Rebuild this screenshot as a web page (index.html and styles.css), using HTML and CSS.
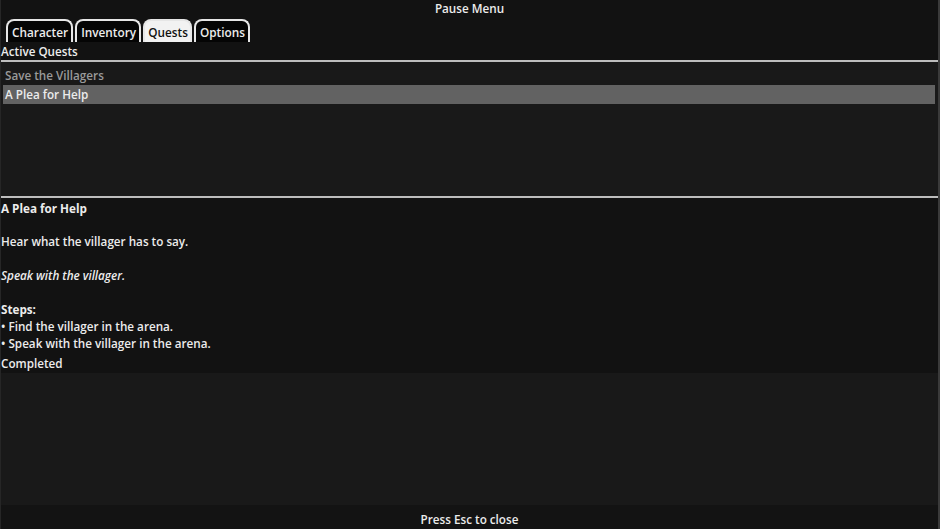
FILE: index.html
```html
<!DOCTYPE html>
<html lang="en">
<head>
    <meta charset="UTF-8">
    <meta name="viewport" content="width=device-width, initial-scale=1.0">
    <title>Pause Menu</title>
    <link rel="stylesheet" href="styles.css">
</head>
<body>
    <div class="menu">
        <div class="menu-title">Pause Menu</div>

        <div class="tabs">
            <div class="tab">Character</div>
            <div class="tab">Inventory</div>
            <div class="tab active">Quests</div>
            <div class="tab">Options</div>
        </div>

        <div class="section-title">Active Quests</div>

        <div class="quest-list">
            <div class="quest-item done">Save the Villagers</div>
            <div class="quest-item selected">A Plea for Help</div>
        </div>

        <div class="quest-detail">
            <p class="quest-name">A Plea for Help</p>
            <p>Hear what the villager has to say.</p>
            <p class="objective">Speak with the villager.</p>
            <div class="steps-title">Steps:</div>
            <div class="step">&bull; Find the villager in the arena.</div>
            <div class="step">&bull; Speak with the villager in the arena.</div>
            <div class="status">Completed</div>
        </div>

        <div class="filler"></div>

        <div class="footer">Press Esc to close</div>
    </div>
</body>
</html>
```

FILE: styles.css
```css
html, body {
    margin: 0;
    height: 100%;
}
body {
    background: #121212;
    color: #ececec;
    font-family: "Open Sans", "Noto Sans", sans-serif;
    font-size: 11.7px;
    font-weight: 600;
}
.menu {
    display: flex;
    flex-direction: column;
    height: 100vh;
    border-right: 2px solid #3a3a3a;
    border-left: 1px solid #262626;
    box-sizing: border-box;
}
.menu-title {
    text-align: center;
    height: 19px;
    line-height: 17px;
}
.tabs {
    display: flex;
    gap: 2px;
    padding-left: 5px;
    height: 23px;
}
.tab {
    border: 2px solid #e6e6e6;
    border-bottom: none;
    border-radius: 8px 8px 0 0;
    background: #050505;
    padding: 0 3px 0 4px;
    line-height: 23px;
    font-size: 11.8px;
}
.tab.active {
    background: #f2f2f2;
    color: #111;
    padding: 0 2px 0 3px;
}
.section-title {
    height: 18px;
    line-height: 18px;
}
.quest-list {
    border-top: 2px solid #bdbdbd;
    border-bottom: 2px solid #bdbdbd;
    background: #191919;
    height: 131px;
    padding: 3px 2px 0 2px;
}
.quest-item {
    height: 20px;
    line-height: 20px;
    padding-left: 2px;
}
.quest-item.done {
    color: #9a9a9a;
}
.quest-item.selected {
    background: #626262;
    height: 19px;
    line-height: 19px;
    margin-right: 1px;
}
.quest-detail {
    padding-top: 2px;
    line-height: 17px;
    height: 173px;
}
.quest-detail p {
    margin: 0 0 17px;
}
.quest-detail .quest-name {
    margin-bottom: 16px;
}
.quest-name,
.steps-title {
    font-weight: 700;
}
.objective {
    font-style: italic;
}
.status {
    margin-top: 3px;
}
.filler {
    flex: 1;
    background: #191919;
}
.footer {
    height: 24px;
    line-height: 28px;
    text-align: center;
    background: #131313;
}
```
